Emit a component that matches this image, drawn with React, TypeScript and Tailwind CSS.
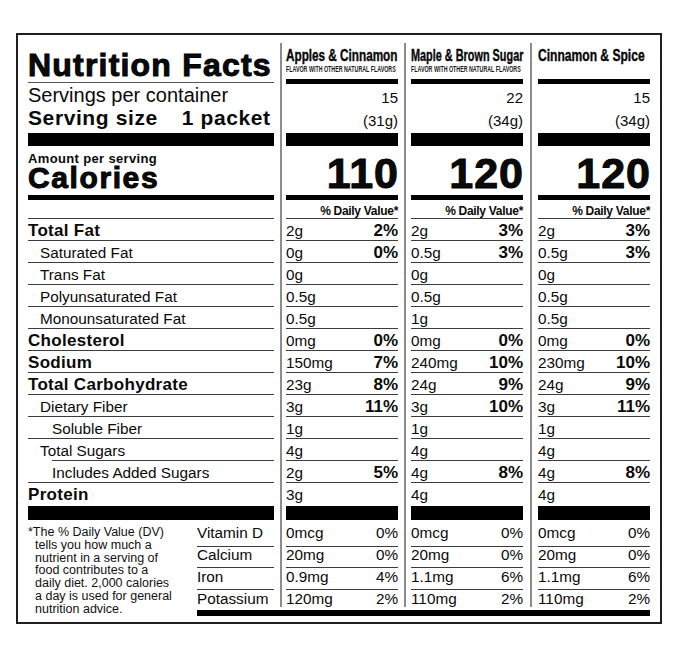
type Cell = [string, string?];

type Flavor = {
  name: string;
  nameScale: string;
  flavor: boolean;
  servings: string;
  size: string;
  calories: string;
  rows: Cell[];
  protein: string;
  vitamins: Cell[];
  box: string;
};

const flavors: Flavor[] = [
  {
    name: 'Apples & Cinnamon',
    nameScale: 'scale-x-[0.69]',
    flavor: true,
    servings: '15',
    size: '(31g)',
    calories: '110',
    rows: [
      ['2g', '2%'],
      ['0g', '0%'],
      ['0g'],
      ['0.5g'],
      ['0.5g'],
      ['0mg', '0%'],
      ['150mg', '7%'],
      ['23g', '8%'],
      ['3g', '11%'],
      ['1g'],
      ['4g'],
      ['2g', '5%'],
    ],
    protein: '3g',
    vitamins: [
      ['0mcg', '0%'],
      ['20mg', '0%'],
      ['0.9mg', '4%'],
      ['120mg', '2%'],
    ],
    box: 'w-[124px] pl-[4px] pr-[6px]',
  },
  {
    name: 'Maple & Brown Sugar',
    nameScale: 'scale-x-[0.64]',
    flavor: true,
    servings: '22',
    size: '(34g)',
    calories: '120',
    rows: [
      ['2g', '3%'],
      ['0.5g', '3%'],
      ['0g'],
      ['0.5g'],
      ['1g'],
      ['0mg', '0%'],
      ['240mg', '10%'],
      ['24g', '9%'],
      ['3g', '10%'],
      ['1g'],
      ['4g'],
      ['4g', '8%'],
    ],
    protein: '4g',
    vitamins: [
      ['0mcg', '0%'],
      ['20mg', '0%'],
      ['1.1mg', '6%'],
      ['110mg', '2%'],
    ],
    box: 'w-[126px] pl-[5px] pr-[7px]',
  },
  {
    name: 'Cinnamon & Spice',
    nameScale: 'scale-x-[0.71]',
    flavor: false,
    servings: '15',
    size: '(34g)',
    calories: '120',
    rows: [
      ['2g', '3%'],
      ['0.5g', '3%'],
      ['0g'],
      ['0.5g'],
      ['0.5g'],
      ['0mg', '0%'],
      ['230mg', '10%'],
      ['24g', '9%'],
      ['3g', '11%'],
      ['1g'],
      ['4g'],
      ['4g', '8%'],
    ],
    protein: '4g',
    vitamins: [
      ['0mcg', '0%'],
      ['20mg', '0%'],
      ['1.1mg', '6%'],
      ['110mg', '2%'],
    ],
    box: 'w-[130px] pl-[6px] pr-[10px]',
  },
];

const nutrients = [
  { label: 'Total Fat', bold: true, pad: '', rule: '' },
  { label: 'Saturated Fat', bold: false, pad: 'pl-[12px]', rule: '' },
  { label: 'Trans Fat', bold: false, pad: 'pl-[12px]', rule: '' },
  { label: 'Polyunsaturated Fat', bold: false, pad: 'pl-[12px]', rule: '' },
  { label: 'Monounsaturated Fat', bold: false, pad: 'pl-[12px]', rule: '' },
  { label: 'Cholesterol', bold: true, pad: '', rule: '' },
  { label: 'Sodium', bold: true, pad: '', rule: '' },
  { label: 'Total Carbohydrate', bold: true, pad: '', rule: '' },
  { label: 'Dietary Fiber', bold: false, pad: 'pl-[12px]', rule: '' },
  { label: 'Soluble Fiber', bold: false, pad: 'pl-[24px]', rule: '' },
  { label: 'Total Sugars', bold: false, pad: 'pl-[12px]', rule: 'ml-[24px]' },
  { label: 'Includes Added Sugars', bold: false, pad: 'pl-[24px]', rule: '' },
];

// vitamin rows: row height, line height, whether a rule follows
const vitaminRows = [
  { label: 'Vitamin D', h: 'h-[23px]', lead: 'leading-[26px]', rule: true },
  { label: 'Calcium', h: 'h-[22px]', lead: 'leading-[24px]', rule: true },
  { label: 'Iron', h: 'h-[22px]', lead: 'leading-[24px]', rule: true },
  { label: 'Potassium', h: 'h-[20px]', lead: 'leading-[24px]', rule: false },
];

function Rule({ className = '' }: { className?: string }) {
  return <div className={`h-px shrink-0 bg-[#3c3c3c] ${className}`} />;
}

function LeftTop() {
  return (
    <div className="flex w-[262px] flex-col pl-[10px] pr-[6px] pt-[14px]">
      <h1 className="h-[32px] whitespace-nowrap text-[32px] font-bold leading-[32px] tracking-[1.2px] [-webkit-text-stroke:1px_#000]">
        Nutrition Facts
      </h1>
      <div className="mt-[1px] h-px bg-[#555]" />
      <div className="mt-[1px] h-[22px] whitespace-nowrap text-[20px] leading-[22px]">
        Servings per container
      </div>
      <div className="mt-[1px] flex h-[22px] whitespace-nowrap text-[21px] font-bold leading-[22px] tracking-[0.6px]">
        <span>Serving size</span>
        <span className="ml-[24px]">1 packet</span>
      </div>
      <div className="mt-[4px] h-[13px] bg-black" />
      <div className="mt-[7px] h-[12px] whitespace-nowrap text-[13px] font-bold leading-[12px] tracking-[0.35px]">
        Amount per serving
      </div>
      <div className="mt-[2px] h-[22px] text-[30px] font-bold leading-[22px] tracking-[1.6px] [-webkit-text-stroke:1px_#000]">
        Calories
      </div>
      <div className="mt-[6px] h-[5px] bg-black" />
      <div className="h-[18px]" />
      <Rule />
      {nutrients.map((n) => (
        <div key={n.label} className="flex h-[22px] flex-col">
          <div
            className={`h-[21px] whitespace-nowrap ${n.pad} ${
              n.bold ? 'text-[17px] font-bold tracking-[0.3px]' : 'text-[15.3px]'
            } leading-[24px]`}
          >
            {n.label}
          </div>
          <Rule className={n.rule} />
        </div>
      ))}
      <div className="h-[23px] text-[17px] font-bold leading-[24px] tracking-[0.3px]">
        Protein
      </div>
      <div className="h-[14px] bg-black" />
    </div>
  );
}

function ColumnTop({ f }: { f: Flavor }) {
  return (
    <div className={`mt-[8px] flex flex-col border-l-2 border-[#8c8c8c] ${f.box}`}>
      <div className="mt-[5px] h-[16px]">
        <span
          className={`block origin-left whitespace-nowrap text-[17px] font-bold leading-[16px] [-webkit-text-stroke:0.4px_#000] ${f.nameScale}`}
        >
          {f.name}
        </span>
      </div>
      <div className="mt-[1px] h-[9px]">
        {f.flavor && (
          <span className="block origin-left scale-x-[0.625] whitespace-nowrap text-[8.5px] font-bold leading-[9px] text-[#1a1a1a]">
            FLAVOR WITH OTHER NATURAL FLAVORS
          </span>
        )}
      </div>
      <div className="mt-[5px] h-[5px] bg-black" />
      <div className="mt-[5px] h-[18px] text-right text-[15px] leading-[18px]">{f.servings}</div>
      <div className="mt-[5px] h-[18px] text-right text-[15px] leading-[18px]">{f.size}</div>
      <div className="mt-[3px] h-[13px] bg-black" />
      <div className="mr-[-1px] mt-[9px] h-[36px] text-right text-[43px] font-bold leading-[36px] tracking-[1px] [-webkit-text-stroke:1px_#000]">
        {f.calories}
      </div>
      <div className="mt-[4px] h-[5px] bg-black" />
      <div className="h-[18px] whitespace-nowrap text-right text-[12px] font-bold leading-[22px] tracking-[-0.3px]">
        % Daily Value*
      </div>
      <Rule />
      {f.rows.map(([amt, pct], i) => (
        <div key={i} className="flex h-[22px] flex-col">
          <div className="flex h-[21px] items-start justify-between whitespace-nowrap leading-[24px]">
            <span className="text-[15.3px]">{amt}</span>
            {pct && <span className="text-[17px] font-bold">{pct}</span>}
          </div>
          <Rule />
        </div>
      ))}
      <div className="h-[23px] text-[15.3px] leading-[24px]">{f.protein}</div>
      <div className="h-[14px] bg-black" />
    </div>
  );
}

function Footnote() {
  return (
    <div className="w-[179px] pl-[17px] pt-[6px] text-[12.5px] leading-[12.8px] text-[#111] [text-indent:-7px]">
      *The % Daily Value (DV)
      <br />
      tells you how much a
      <br />
      nutrient in a serving of
      <br />
      food contributes to a
      <br />
      daily diet. 2,000 calories
      <br />
      a day is used for general
      <br />
      nutrition advice.
    </div>
  );
}

function VitaminLabels() {
  return (
    <div className="flex w-[83px] flex-col pr-[6px]">
      {vitaminRows.map((v) => (
        <div key={v.label} className={`flex flex-col ${v.h}`}>
          <div className={`flex-1 whitespace-nowrap text-[15.3px] ${v.lead}`}>{v.label}</div>
          {v.rule && <Rule />}
        </div>
      ))}
    </div>
  );
}

function ColumnBottom({ f }: { f: Flavor }) {
  return (
    <div className={`flex flex-col border-l-2 border-[#8c8c8c] ${f.box}`}>
      {vitaminRows.map((v, i) => (
        <div key={v.label} className={`flex flex-col ${v.h}`}>
          <div
            className={`flex flex-1 items-start justify-between whitespace-nowrap text-[15.3px] ${v.lead}`}
          >
            <span>{f.vitamins[i][0]}</span>
            <span>{f.vitamins[i][1]}</span>
          </div>
          {v.rule && <Rule />}
        </div>
      ))}
    </div>
  );
}

export default function App() {
  return (
    <div className="min-h-screen bg-white pl-[16px] pt-[33px] font-['Liberation_Sans',Arial,sans-serif] text-[#0a0a0a]">
      <div className="flex h-[591px] w-[646px] flex-col border-2 border-[#1e1e1e]">
        {/* Header, calories and nutrient rows */}
        <div className="flex">
          <LeftTop />
          {flavors.map((f) => (
            <ColumnTop key={f.name} f={f} />
          ))}
        </div>

        {/* Footnote and vitamins */}
        <div className="flex flex-1">
          <Footnote />
          <div className="flex flex-col">
            <div className="flex">
              <VitaminLabels />
              {flavors.map((f) => (
                <ColumnBottom key={f.name} f={f} />
              ))}
            </div>
            <div className="mt-[3px] h-[6px] w-[453px] bg-black" />
          </div>
        </div>
      </div>
    </div>
  );
}
